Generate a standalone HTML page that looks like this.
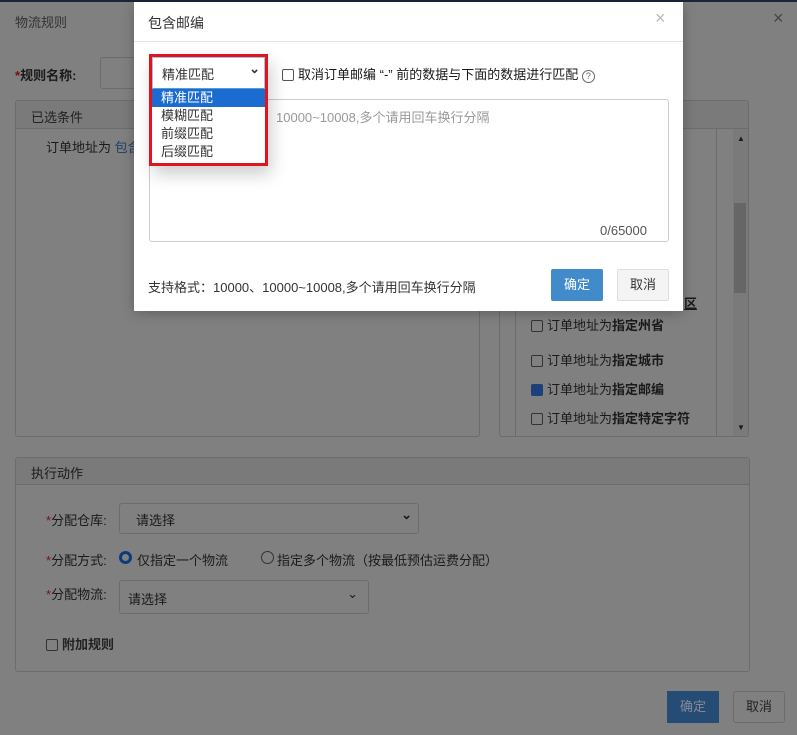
<!DOCTYPE html>
<html><head><meta charset="utf-8"><style>
*{box-sizing:border-box;margin:0;padding:0}
body{width:797px;height:735px;overflow:hidden;background:#808080;font-family:"Liberation Sans","Noto Sans CJK SC",sans-serif;font-size:13px;color:#1a1a1a;position:relative}
.a{position:absolute}
.box{border:1px solid #6c6c6c;border-radius:3px}
.hd{background:#7a7a7a;border-bottom:1px solid #6c6c6c}
.cb{display:inline-block;width:12px;height:12px;border:1px solid #333;border-radius:2px;vertical-align:-2px;margin-right:4px;background:#808080}
</style></head><body>
<div class="a" style="left:0;top:0;width:797px;height:2px;background:#1c2636"></div>
<div class="a" style="left:15px;top:12px;color:#333">物流规则</div>
<div class="a" style="left:773px;top:8px;font-size:18px;color:#444">×</div>
<div class="a" style="left:15px;top:65px;font-weight:bold"><span style="color:#7a1010">*</span>规则名称:</div>
<div class="a box" style="left:100px;top:57px;width:40px;height:32px;border-right:none"></div>

<div class="a box" style="left:15px;top:100px;width:465px;height:337px">
 <div class="hd" style="height:28px;padding:6px 15px;color:#222">已选条件</div>
 <div style="padding:8px 30px">订单地址为 <span style="color:#1e3f66">包含</span></div>
</div>
<div class="a box" style="left:499px;top:100px;width:250px;height:337px;overflow:hidden">
 <div class="hd" style="height:28px"></div>
 <div class="a" style="left:15px;top:28px;width:1px;height:310px;background:#6c6c6c"></div>
 <div class="a" style="left:216px;top:28px;width:1px;height:310px;background:#6c6c6c"></div>
 <div class="a" style="left:233px;top:28px;width:15px;height:310px;background:#7a7a7a"></div>
 <div class="a" style="left:234px;top:102px;width:12px;height:90px;background:#666"></div>
 <div class="a" style="left:237px;top:33px;font-size:8px">▲</div>
 <div class="a" style="left:237px;top:322px;font-size:8px">▼</div>
 <div class="a" style="left:31px;top:214px"><span class="cb"></span>订单地址为<b>指定州省</b></div>
 <div class="a" style="left:31px;top:249px"><span class="cb"></span>订单地址为<b>指定城市</b></div>
 <div class="a" style="left:31px;top:278px"><span class="cb" style="background:#1d3f7a;border-color:#1d3f7a"></span>订单地址为<b>指定邮编</b></div>
 <div class="a" style="left:31px;top:307px"><span class="cb"></span>订单地址为<b>指定特定字符</b></div>
 <div class="a" style="left:184px;top:192px;text-decoration:underline"><b>区</b></div>
</div>

<div class="a box" style="left:15px;top:457px;width:735px;height:215px">
 <div class="hd" style="height:27px;padding:5px 15px">执行动作</div>
</div>
<div class="a" style="left:46px;top:510px"><span style="color:#7a1010">*</span>分配仓库:</div>
<div class="a box" style="left:119px;top:503px;width:300px;height:31px;padding:6px 16px">请选择<span style="position:absolute;right:6px;top:3px;font-weight:bold">⌄</span></div>
<div class="a" style="left:46px;top:550px"><span style="color:#7a1010">*</span>分配方式:</div>
<div class="a" style="left:119px;top:551px;width:13px;height:13px;border-radius:50%;border:3px solid #0f3a7a;background:#808080"></div>
<div class="a" style="left:137px;top:550px">仅指定一个物流</div>
<div class="a" style="left:261px;top:551px;width:13px;height:13px;border-radius:50%;border:1px solid #333"></div>
<div class="a" style="left:277px;top:550px">指定多个物流（按最低预估运费分配）</div>
<div class="a" style="left:46px;top:584px"><span style="color:#7a1010">*</span>分配物流:</div>
<div class="a box" style="left:119px;top:580px;width:250px;height:34px;padding:8px 8px">请选择<span style="position:absolute;right:10px;top:5px">⌄</span></div>
<div class="a" style="left:46px;top:634px"><span class="cb"></span><b style="color:#222">附加规则</b></div>
<div class="a" style="left:667px;top:691px;width:52px;height:32px;background:#244c74;color:#889;text-align:center;line-height:32px">确定</div>
<div class="a box" style="left:733px;top:691px;width:52px;height:32px;text-align:center;line-height:30px;color:#222">取消</div>

<div class="a" style="left:134px;top:2px;width:549px;height:309px;background:#fff;box-shadow:0 2px 12px rgba(0,0,0,.25)">
 <div style="height:40px;border-bottom:1px solid #e5e5e5;padding:11px 14px;font-size:14px;color:#333">包含邮编</div>
 <div class="a" style="left:521px;top:6px;font-size:18px;color:#bbb">×</div>
 <div class="a" style="left:148px;top:62px"><span class="cb" style="background:#fff;border-color:#555"></span>取消订单邮编 “-” 前的数据与下面的数据进行匹配 <span style="display:inline-block;width:13px;height:13px;border:1px solid #666;border-radius:50%;font-size:9px;text-align:center;line-height:11px;color:#666">?</span></div>
 <div class="a" style="left:15px;top:97px;width:520px;height:143px;border:1px solid #ccc;border-radius:3px"></div>
 <div class="a" style="left:142px;top:105px;color:#999">10000~10008,多个请用回车换行分隔</div>
 <div class="a" style="left:466px;top:221px;color:#555">0/65000</div>
 <div class="a" style="left:14px;top:275px;color:#333">支持格式：10000、10000~10008,多个请用回车换行分隔</div>
 <div class="a" style="left:417px;top:267px;width:52px;height:32px;background:#428bca;border-radius:2px;color:#fff;text-align:center;line-height:32px">确定</div>
 <div class="a" style="left:483px;top:267px;width:52px;height:32px;background:#f4f4f4;border:1px solid #ddd;border-radius:2px;color:#333;text-align:center;line-height:30px">取消</div>
 <div class="a" style="left:15px;top:52px;width:118px;height:112px;box-shadow:4px 8px 16px rgba(0,0,0,.2)"></div>
 <div class="a" style="left:15px;top:52px;width:119px;height:112px;border:3px solid #e0131f;background:#fff">
  <div style="height:32px;border:1px solid #9ec3e8;border-bottom:1px solid #5a9ad8;padding:6px 9px;color:#333;position:relative">精准匹配<span style="position:absolute;right:4px;top:3px;font-weight:bold">⌄</span></div>
  <div style="line-height:18px;padding-left:9px">
   <div style="background:#1b6bd1;color:#fff;margin-left:-9px;padding-left:9px">精准匹配</div>
   <div style="color:#333">模糊匹配</div>
   <div style="color:#333">前缀匹配</div>
   <div style="color:#333">后缀匹配</div>
  </div>
 </div>
</div>
</body></html>
